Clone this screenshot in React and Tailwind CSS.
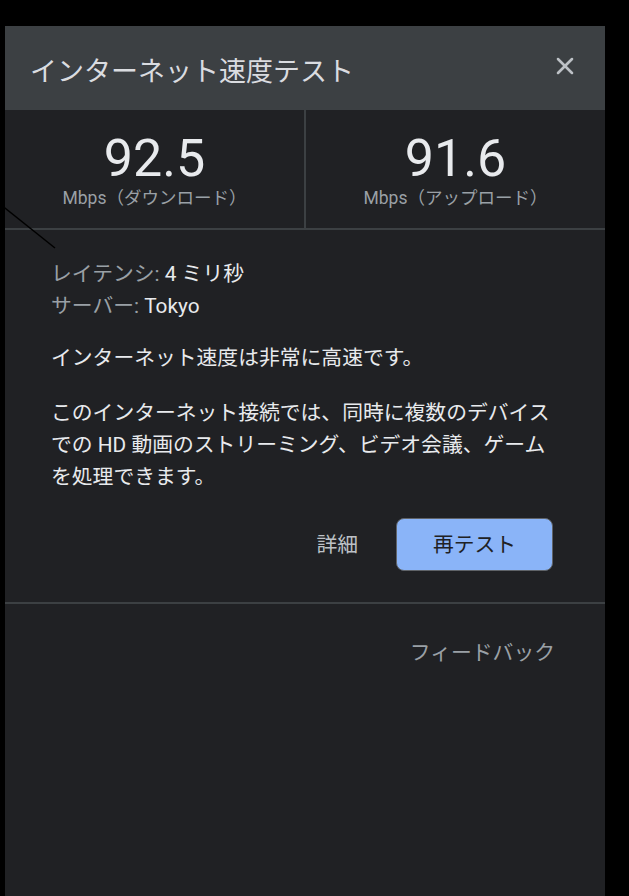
import { X } from "lucide-react";

const font = { fontFamily: 'Roboto, "Noto Sans CJK JP", sans-serif' };

const Stat = ({ value, label, border }) => (
  <div
    className={`flex-1 flex flex-col items-center pt-[23px] pb-[19px] ${
      border ? "border-r-2 border-[#3c4043]" : ""
    }`}
  >
    <div className="text-[52px] leading-[52px] text-[#e8eaed]">{value}</div>
    <div className="text-[17.5px] leading-[22px] mt-[2px] text-[#9aa0a6]">{label}</div>
  </div>
);

const App = () => {
  return (
    <div className="relative min-h-[896px] bg-black overflow-hidden" style={font}>
      <div className="ml-[5px] pt-[26px] w-[600px]">
        <div className="min-h-[870px] bg-[#202124] flex flex-col">
          <div className="h-[84px] bg-[#3c4043] flex items-center justify-between pl-[25px] pr-[26px]">
            <h1 className="text-[27px] text-[#dadce0] font-normal pt-[9px]">
              インターネット速度テスト
            </h1>
            <X className="text-[#bdc1c6] mb-[4px]" size={28} strokeWidth={2.2} />
          </div>

          <div className="flex border-b-2 border-[#3c4043]">
            <Stat value="92.5" label="Mbps（ダウンロード）" border />
            <Stat value="91.6" label="Mbps（アップロード）" />
          </div>

          <div className="pl-[46px] pr-[52px] pt-[28px] text-[20.8px] leading-[32px] text-[#e8eaed]">
            <div>
              <span className="text-[#9aa0a6]">レイテンシ: </span>4 ミリ秒
            </div>
            <div>
              <span className="text-[#9aa0a6]">サーバー: </span>Tokyo
            </div>
            <p className="mt-[20px]">インターネット速度は非常に高速です。</p>
            <p className="mt-[23px] whitespace-nowrap">
              このインターネット接続では、同時に複数のデバイス
              <br />
              での HD 動画のストリーミング、ビデオ会議、ゲーム
              <br />
              を処理できます。
            </p>
            <div className="mt-[25px] flex items-center justify-end gap-[38px]">
              <span className="text-[#bdc1c6]">詳細</span>
              <button className="w-[157px] h-[53px] rounded-lg bg-[#8ab4f8] border border-[#5f6368] text-[20.8px] text-[#202124]">
                再テスト
              </button>
            </div>
          </div>

          <div className="mt-[31px] border-t-2 border-[#3c4043]" />
          <div className="pt-[33px] pr-[50px] text-right text-[20.8px] leading-[32px] text-[#9aa0a6]">
            フィードバック
          </div>
        </div>
      </div>

      <svg className="absolute left-0 top-0 pointer-events-none" width="60" height="260">
        <line x1="0" y1="204" x2="55" y2="248" stroke="#000" strokeWidth="1.5" />
      </svg>
    </div>
  );
};

export default App;
